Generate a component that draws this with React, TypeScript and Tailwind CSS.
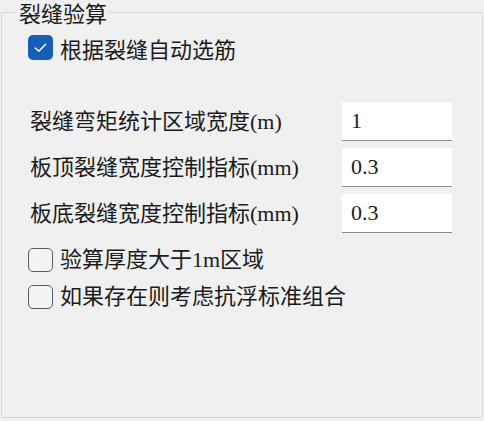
import React from "react";

function CheckBox({ checked }: { checked: boolean }) {
  if (checked) {
    return (
      <span className="flex w-[25px] h-[25px] shrink-0 items-center justify-center rounded-[5px] bg-[#175fb5]">
        <svg width="15" height="15" viewBox="0 0 16 16" fill="none">
          <path d="M2.5 8.5 L6.2 12 L13.5 4.5" stroke="white" strokeWidth="1.6" strokeLinecap="round" strokeLinejoin="round" />
        </svg>
      </span>
    );
  }
  return <span className="block w-[25px] h-[24px] shrink-0 rounded-[5px] border-[1.5px] border-[#5c5c5c] bg-[#f3f3f3]" />;
}

function Row({ label, value }: { label: string; value: string }) {
  return (
    <div className="flex items-center h-[39px] font-['Liberation_Serif','Noto_Sans_CJK_SC',serif]">
      <span className="w-[314px] pl-[2px] text-[22px] leading-[24px] text-[#1b1b1b]">{label}</span>
      <div className="w-[110px] h-[39px] bg-white border-b border-[#8c8c8c] flex items-center pl-[9px] text-[22px] leading-[24px] text-[#1b1b1b]">
        {value}
      </div>
    </div>
  );
}

export default function App() {
  return (
    <div className="w-[484px] h-[421px] bg-[#f0f0f0] pl-[1px] font-['Noto_Sans_CJK_SC','Noto_Sans',sans-serif] overflow-hidden">
      <fieldset className="w-[482px] h-[418px] border border-[#d8d8d8] rounded-[2px]">
        <legend className="ml-[15px] px-[2px] text-[22px] leading-[24px] text-[#1b1b1b]">裂缝验算</legend>
        <div className="flex flex-col pl-[26px]">
          <div className="flex items-center gap-[7px] mt-[11px] h-[25px]">
            <CheckBox checked />
            <span className="text-[22px] leading-[24px] text-[#1b1b1b]">根据裂缝自动选筋</span>
          </div>
          <div className="flex flex-col gap-[7px] mt-[42px]">
            <Row label="裂缝弯矩统计区域宽度(m)" value="1" />
            <Row label="板顶裂缝宽度控制指标(mm)" value="0.3" />
            <Row label="板底裂缝宽度控制指标(mm)" value="0.3" />
          </div>
          <div className="flex flex-col gap-[13px] mt-[15px] font-['Liberation_Serif','Noto_Sans_CJK_SC',serif]">
            <div className="flex items-center gap-[7px] h-[24px]">
              <CheckBox checked={false} />
              <span className="text-[22px] leading-[24px] text-[#1b1b1b]">验算厚度大于1m区域</span>
            </div>
            <div className="flex items-center gap-[7px] h-[24px]">
              <CheckBox checked={false} />
              <span className="text-[22px] leading-[24px] text-[#1b1b1b]">如果存在则考虑抗浮标准组合</span>
            </div>
          </div>
        </div>
      </fieldset>
    </div>
  );
}
